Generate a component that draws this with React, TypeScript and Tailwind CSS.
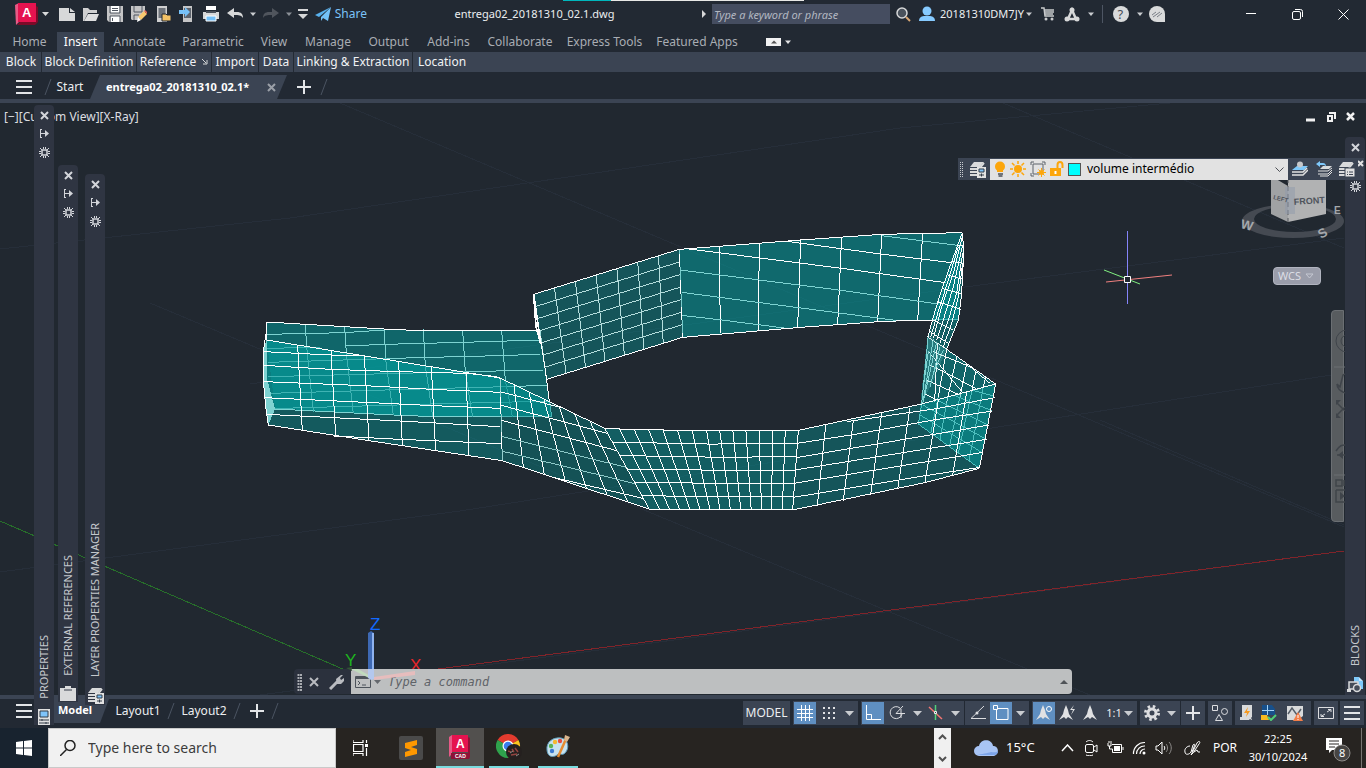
import type { ReactNode } from "react";

type Point = [number, number];

function Svg({ w = 16, h = 16, children }: { w?: number; h?: number; children: ReactNode }) {
 return (
  <svg width={w} height={h} viewBox={`0 0 ${w} ${h}`} fill="none" className="shrink-0" aria-hidden="true">
   {children}
  </svg>
 );
}

function Caret({ color = "#c9ccd0", big = false }: { color?: string; big?: boolean }) {
 return (
  <Svg w={9} h={6}>
   <path d={big ? "M0 1h9L4.5 6z" : "M2 1.500h6L5 5z"} fill={color} />
  </Svg>
 );
}

function IconButton({ label, className, children }: { label: string; className: string; children: ReactNode }) {
 return (
  <button type="button" aria-label={label} className={`flex shrink-0 items-center justify-center ${className}`}>
   {children}
  </button>
 );
}

function Burger() {
 return (
  <Svg>
   <path d="M0 2h16M0 8h16M0 14h16" stroke="#e3e5e8" strokeWidth="2" />
  </Svg>
 );
}

function Plus() {
 return (
  <Svg>
   <path d="M8 1v14M1 8h14" stroke="#e3e5e8" strokeWidth="2" />
  </Svg>
 );
}

function Slash() {
 return (
  <Svg w={8} h={16}>
   <path d="M7 0L1 16" stroke="#4b5462" strokeWidth="1" />
  </Svg>
 );
}

function LayerStack({ badge }: { badge?: ReactNode }) {
 return (
  <Svg w={17} h={17}>
   <path d="M5 1h10l-4 5H1z" fill="#d9dadb" />
   <path d="M1 8h7M1 11h7M1 14h7M11 7l4-5" stroke="#d9dadb" strokeWidth="2" />
   {badge}
  </Svg>
 );
}

const panelBadge = (
 <g>
  <path d="M8 6h9v11H8z" fill="#e2e2e2" />
  <path d="M10 8h5v3h-5z" fill="#7fc4fa" stroke="#333c49" />
  <path d="M10 14h5M12.500 12.500v3" stroke="#333c49" />
 </g>
);

const listBadge = (
 <g>
  <path d="M7 7h10v9H7z" fill="#e2e2e2" stroke="#3b4453" />
  <path d="M9 11h1M11 11h4M9 13.500h1M11 13.500h4" stroke="#3b4453" />
 </g>
);

const quickAccess = [
 {
  label: "New",
  icon: (
   <Svg>
    <path d="M0 2h10v5h6v8H0z" fill="#d7d8d9" />
    <path d="M11 2l5 4h-5z" fill="#d7d8d9" />
   </Svg>
  ),
 },
 {
  label: "Open",
  icon: (
   <Svg>
    <path d="M0 15V2h5l2 2h7v3H5L1 15z" fill="#cfcfd0" />
    <path d="M5 8h11l-3 7H1z" fill="#dededf" />
   </Svg>
  ),
 },
 {
  label: "Save",
  icon: (
   <Svg>
    <path d="M0 0h16v16H2l-2-2z" fill="#c5c5c6" />
    <path d="M4 0h8v7H4zM4 10h9v6H4z" fill="#fff" />
    <path d="M3 0v7h10V0M3 16v-6h10v6M5 2.500h6M5 4.500h6M5.500 12v3" stroke="#505660" />
   </Svg>
  ),
 },
 {
  label: "Save as",
  icon: (
   <Svg>
    <path d="M0 0h14v7l-7 7H1l-1-1z" fill="#c5c5c6" />
    <path d="M3 0v6h8V0M3 14v-5h5" stroke="#505660" />
    <path d="M13 5l3 3-6 6-3-3z" fill="#f8c96f" />
    <path d="M13 5l1-1 3 3-1 1z" fill="#e8665a" />
    <path d="M7 11l3 3-4 2z" fill="#fff" />
   </Svg>
  ),
 },
 {
  label: "Open from web and mobile",
  icon: (
   <Svg>
    <path d="M2 0h10v16H2z" fill="#cfcfd0" />
    <path d="M3.500 2h7v10h-7z" fill="#6d727a" />
    <path d="M7 8h4l1 1h4v6H7z" fill="#f2c166" stroke="#222933" />
   </Svg>
  ),
 },
 {
  label: "Save to web and mobile",
  icon: (
   <Svg>
    <path d="M4 0h9v16H4z" fill="#c5c5c6" />
    <path d="M5 2h7v10H5z" fill="#5d636d" />
    <path d="M0 4h6V1l5 5-5 5V8H0z" fill="#76c0f7" />
   </Svg>
  ),
 },
 {
  label: "Plot",
  icon: (
   <Svg>
    <path d="M3 0h10v4H3z" fill="#fff" />
    <path d="M0 6h16v7H0z" fill="#d7d8d9" />
    <path d="M3 5h10v2H3z" fill="#4a505a" />
    <path d="M3 10h10v5H3z" fill="#76c0f7" stroke="#fff" />
   </Svg>
  ),
 },
];

function TitleBar() {
 return (
  <header className="flex h-7 items-center text-xs text-[#eceef0]">
   <div className="flex w-[367px] shrink-0 items-center">
    <IconButton label="Application menu" className="ml-3.5 w-6">
     <Svg w={24} h={22}>
      <path d="M1 2l4-2v19l-3 3z" fill="#e75a86" />
      <path d="M3 22l3-3h16V3l2 1v15l-3 3z" fill="#7c0a28" />
      <path d="M4 0h18v19H4z" fill="#e5134f" />
      <text x="8" y="14" fontSize="13" fontWeight="700" fill="#fff" fontFamily="Liberation Sans, sans-serif">
       A
      </text>
     </Svg>
    </IconButton>
    <IconButton label="Menu options" className="w-[15px]">
     <Svg w={7} h={4}>
      <path d="M0 0h7L3.500 4z" fill="#d9dadb" />
     </Svg>
    </IconButton>
    <span className="w-1" />
    {quickAccess.map((item) => (
     <IconButton key={item.label} label={item.label} className="h-6 w-6">
      {item.icon}
     </IconButton>
    ))}
    <IconButton label="Undo" className="w-6">
     <Svg>
      <path d="M7 2v4h3c4 0 6 2 6 6-2-3-4-3-9-3v3L0 7z" fill="#d7d8d9" />
     </Svg>
    </IconButton>
    <IconButton label="Undo list" className="w-3">
     <Caret />
    </IconButton>
    <IconButton label="Redo" className="w-6">
     <Svg>
      <path d="M9 2v4H6c-4 0-6 2-6 6 2-3 4-3 9-3v3l7-5z" fill="#50555d" />
     </Svg>
    </IconButton>
    <IconButton label="Redo list" className="w-3">
     <Caret color="#8b9097" />
    </IconButton>
    <IconButton label="Customize" className="w-4">
     <Svg w={10} h={10}>
      <path d="M0 1h10" stroke="#d7d8d9" strokeWidth="2" />
      <path d="M0 5h10L5 10z" fill="#d7d8d9" />
     </Svg>
    </IconButton>
    <button type="button" className="ml-1 flex items-center gap-1 text-[#7cc3f8]">
     <Svg>
      <path d="M16 1L0 9l4 2z" fill="#58b1ee" />
      <path d="M16 1L6 11v4l2-3 5 3z" fill="#73c2f9" />
     </Svg>
     Share
    </button>
   </div>
   <h1 className="flex-1 whitespace-nowrap text-center text-[11px]">entrega02_20181310_02.1.dwg</h1>
   <div className="flex w-[664px] shrink-0 items-center">
    <Svg w={10} h={10}>
     <path d="M0 1l4 4-4 4z" fill="#d7d8d9" />
    </Svg>
    <input
     aria-label="Search help"
     placeholder="Type a keyword or phrase"
     className="h-5 w-[178px] bg-[#454d60] px-0.5 text-[11px] italic text-white placeholder:text-[#b3b8c2]"
    />
    <IconButton label="Search" className="ml-1 w-5">
     <Svg>
      <circle cx="6" cy="7" r="5" fill="#4a525c" stroke="#d7d8d9" strokeWidth="1.500" />
      <path d="M10 11l4 4" stroke="#d8a774" strokeWidth="2" />
     </Svg>
    </IconButton>
    <button type="button" className="ml-[5px] flex w-[113px] items-center whitespace-nowrap text-[11px]">
     <span className="mr-[5px] shrink-0">
      <Svg>
       <circle cx="8" cy="5" r="4.500" fill="#86caff" />
       <path d="M0 15c0-4 3-5 6-5h4c3 0 6 1 6 5z" fill="#86caff" />
      </Svg>
     </span>
     20181310DM7JY
     <Caret />
    </button>
    <IconButton label="Store" className="ml-1 w-6">
     <Svg w={14} h={14}>
      <path d="M0 1h3l1 8h9M3 3h10M4 5h9M4 7h8" stroke="#c8cacc" strokeWidth="1.500" />
      <circle cx="5" cy="12" r="1.500" fill="#c8cacc" />
      <circle cx="11" cy="12" r="1.500" fill="#c8cacc" />
     </Svg>
    </IconButton>
    <IconButton label="Autodesk app store" className="w-6">
     <Svg w={16} h={15}>
      <path d="M8 3l4 9H4z" stroke="#d7d8d9" strokeWidth="2.500" />
      <circle cx="8" cy="3" r="2.500" fill="#d7d8d9" />
      <circle cx="3" cy="12" r="2.500" fill="#d7d8d9" />
      <circle cx="13" cy="12" r="2.500" fill="#d7d8d9" />
     </Svg>
    </IconButton>
    <IconButton label="App options" className="w-3">
     <Caret />
    </IconButton>
    <span className="ml-1.5 mr-2 h-4.5 w-px bg-[#4d5563]" />
    <IconButton label="Help" className="ml-0.5 w-4">
     <Svg>
      <circle cx="8" cy="8" r="8" fill="#d9dadb" />
      <text x="4.500" y="13" fontSize="13" fill="#454c56" fontFamily="Noto Sans, sans-serif">
       ?
      </text>
     </Svg>
    </IconButton>
    <IconButton label="Help options" className="w-5">
     <Caret />
    </IconButton>
    <IconButton label="Assistant" className="w-4">
     <Svg>
      <path d="M8 0a8 8 0 1 0 0 16h8V8a8 8 0 0 0-8-8z" fill="#d9dadb" />
      <path d="M3 9l4-3M4 11l7-5M8 11l5-4" stroke="#7a7f87" />
     </Svg>
    </IconButton>
    <IconButton label="Minimize" className="ml-auto w-[46px]">
     <Svg w={10} h={10}>
      <path d="M0 4.500h10" stroke="#fff" />
     </Svg>
    </IconButton>
    <IconButton label="Restore" className="w-[46px]">
     <Svg w={11} h={11}>
      <rect x=".5" y="2.500" width="8" height="8" rx="1.500" stroke="#fff" />
      <path d="M3 .5h5.500a2 2 0 0 1 2 2V8" stroke="#fff" />
     </Svg>
    </IconButton>
    <IconButton label="Close" className="w-[46px]">
     <Svg w={11} h={11}>
      <path d="M.5.5l10 10M10.500.5l-10 10" stroke="#fff" />
     </Svg>
    </IconButton>
   </div>
  </header>
 );
}

const ribbonTabs = [
 { title: "Home", width: "w-[57px]" },
 { title: "Insert", width: "w-[47px]" },
 { title: "Annotate", width: "w-[71px]" },
 { title: "Parametric", width: "w-[76px]" },
 { title: "View", width: "w-[46px]" },
 { title: "Manage", width: "w-[62px]" },
 { title: "Output", width: "w-[59px]" },
 { title: "Add-ins", width: "w-[61px]" },
 { title: "Collaborate", width: "w-[82px]" },
 { title: "Express Tools", width: "w-[87px]" },
 { title: "Featured Apps", width: "w-[98px]" },
];

const ribbonPanels = [
 { title: "Block", width: "w-[41px]" },
 { title: "Block Definition", width: "w-[95px]" },
 { title: "Reference", width: "w-[75px]" },
 { title: "Import", width: "w-[47px]" },
 { title: "Data", width: "w-[35px]" },
 { title: "Linking & Extraction", width: "w-[119px]" },
 { title: "Location", width: "w-[58px]" },
];

function Ribbon() {
 return (
  <div className="text-xs">
   <nav className="flex h-6 items-end">
    {ribbonTabs.map((tab) => (
     <button
      type="button"
      key={tab.title}
      className={`h-5 shrink-0 whitespace-nowrap ${tab.width} ${
       tab.title === "Insert" ? "bg-[#3b4453] text-white" : "text-[#a9adb3]"
      } ${tab.title === "Home" ? "pl-0.5" : ""}`}
     >
      {tab.title}
     </button>
    ))}
    <IconButton label="Minimize ribbon" className="ml-5 h-5 gap-0.5">
     <Svg w={15} h={8}>
      <path d="M0 0h15v8H0z" fill="#f1f1f2" />
      <path d="M5 5.500h6L8 2.500z" fill="#555" />
     </Svg>
     <Caret color="#e1e2e4" />
    </IconButton>
   </nav>
   <div className="flex h-5 bg-[#3b4453] pl-px text-[#f1f2f4]">
    {ribbonPanels.map((panel) => (
     <button
      type="button"
      key={panel.title}
      className={`flex shrink-0 items-center justify-center gap-1.5 whitespace-nowrap border-[#232a34] ${panel.width} ${
       panel.title === "Location" ? "" : "border-r"
      }`}
     >
      {panel.title}
      {panel.title === "Reference" && (
       <Svg w={6} h={6}>
        <path d="M0 0l4 4M5 1v4H1" stroke="#d7d8d9" />
       </Svg>
      )}
     </button>
    ))}
   </div>
  </div>
 );
}

function DocumentTabs() {
 return (
  <div className="flex h-[27px] items-center pt-[3px] text-xs text-[#eceef0]">
   <IconButton label="File tab menu" className="w-12">
    <Burger />
   </IconButton>
   <div className="-ml-1">
    <Slash />
   </div>
   <button type="button" className="w-[36px]">
    Start
   </button>
   <div className="ml-0.5 flex h-6 w-[197px] shrink-0 items-center bg-[#3b4453] pl-4 [clip-path:polygon(10px_0,100%_0,calc(100%_-_10px)_100%,0_100%)]">
    <button type="button" className="w-[149px] whitespace-nowrap text-left text-[11px] font-bold text-white">
     entrega02_20181310_02.1*
    </button>
    <IconButton label="Close tab" className="ml-3">
     <Svg w={9} h={9}>
      <path d="M1 1l7 7M8 1L1 8" stroke="#9ba0a8" strokeWidth="2" />
     </Svg>
    </IconButton>
   </div>
   <IconButton label="New tab" className="ml-[5px] w-6">
    <Plus />
   </IconButton>
   <div className="ml-1">
    <Slash />
   </div>
  </div>
 );
}

// Line path for the iso curves of a quad, corners given clockwise from top left
function isoCurves([a, b, c, d]: Point[], cols: number, rows: number) {
 const mix = (p: Point, q: Point, t: number) => [p[0] + (q[0] - p[0]) * t, p[1] + (q[1] - p[1]) * t];
 let path = "";
 for (let i = 0; i <= cols; i++) {
  path += `M${mix(a, b, i / cols)}L${mix(d, c, i / cols)}`;
 }
 for (let i = 0; i <= rows; i++) {
  path += `M${mix(a, d, i / rows)}L${mix(b, c, i / rows)}`;
 }
 return path;
}

function Quad({
 corners,
 cols,
 rows,
 opacity,
 stroke = "#fff",
}: {
 corners: Point[];
 cols: number;
 rows: number;
 opacity: number;
 stroke?: string;
}) {
 return (
  <>
   <polygon points={corners.join(" ")} fill="#02a0a0" fillOpacity={opacity} stroke="none" />
   <path d={isoCurves(corners, cols, rows)} stroke={stroke} />
   <polygon points={corners.join(" ")} />
  </>
 );
}

function Model() {
 const soft = "#7ed3d2";
 return (
  <g fill="none" stroke="#fff" strokeWidth="3" shapeRendering="crispEdges">
   <g transform="translate(250 220) scale(0.333333)">
    <clipPath id="slope">
     <path d="M750 474L1065 625 1197 867 757 722z" />
    </clipPath>
    <path
     d="M50 306L400 327 490 331H870L905 590H550L430 585 75 565 50 540z"
     fill="#02a0a0"
     fillOpacity=".52"
     stroke="none"
    />
    <path
     d="M50 360L750 474 757 722 55 615 47 560 40 480 42 380z"
     fill="#02a0a0"
     fillOpacity=".42"
     stroke="none"
    />
    <path d="M50 360L750 474 898 543 905 590H550L430 585 75 565z" fill="#02a0a0" fillOpacity=".35" stroke="none" />
    <g stroke={soft}>
     <path d="M166 314L170 380M284 320L289 399M403 326L407 420M520 328L526 438M638 331L646 457M755 331L766 480" />
     <path d="M50 343L284 338 403 330M287 378L405 373 640 367 870 360M410 416L525 412 640 410 870 403M648 455L880 450M770 500L890 496M870 544L898 543" />
     <path d="M75 567L430 585 550 590H905L898 540" />
    </g>
    <g stroke="#3fb3b3">
     <path d="M170 380L190 575M289 399L310 580M407 420L430 585M526 438L548 588M646 457L668 590M766 480L787 590" />
     <path d="M50 385L210 382M55 427L410 416M55 470L530 458 648 455M60 520L650 503 770 500M60 566L545 552 870 544" />
    </g>
    <path d="M50 306L400 327 490 331H870L898 543" />
    <path d="M50 360L52 480 75 567 55 615 47 560 40 480 42 380z" fill={soft} stroke="none" />
    <path d="M50 306V360L750 474 757 722 357 662 55 615 47 560 40 480 42 380 50 330" />
    <path d="M143 377L157 632M243 392L257 647M343 408L357 662M446 425L457 678M544 440L557 694M648 457L657 709" />
    <path d="M42 395L240 405 343 408M40 436L240 448 447 455 650 460 740 470M42 485L345 497 547 508 750 517M45 533L345 547 550 557 750 565M50 583L450 603 750 620M250 648L450 658 755 671" />
    <path d="M750 474L1065 625 1197 867 757 722z" fill="#028d8d" fillOpacity=".42" stroke="none" />
    <g clipPath="url(#slope)">
     <path d="M792 494L820 742M837 515L883 763M882 537L946 784M928 560L1009 805M974 582L1072 826M1020 604L1134 846" />
     <path d="M750 470L1200 589M750 515L1200 632M750 555L1200 674M750 600L1200 718M750 735L1200 840" />
     <path d="M750 648L1200 760M750 692L1200 802" stroke="#8dc9c8" />
    </g>
    <path d="M750 474L1065 625M757 722L1197 867" />
    <Quad
     corners={[
      [851, 223],
      [1288, 88],
      [1298, 352],
      [890, 478],
     ]}
     cols={7}
     rows={7}
     opacity={0.38}
     stroke="#b5dedd"
    />
    <path d="M851 223L858 320 872 372 862 300z" strokeWidth="5" />
   </g>
   <g transform="translate(600 220) scale(0.333333)">
    <clipPath id="back">
     <path d="M238 88L602 60 845 43 1087 38 1000 300 850 304 602 322 248 352z" />
    </clipPath>
    <path d="M238 88L602 60 845 43 1087 38 1075 298 850 304 602 322 248 352z" fill="#02a0a0" fillOpacity=".54" stroke="none" />
    <g clipPath="url(#back)">
     <path d="M358 78L361 340M478 67L475 330M602 60L593 322M725 48L713 313M845 45L833 307M968 38L953 302" />
     <path d="M260 86L725 145 1087 195M545 62L850 103 1087 132" />
     <path
      d="M240 150L478 180 715 210 1087 262M245 217L480 248 710 278 940 308M245 286L365 300 560 325M845 47L1087 78"
      stroke={soft}
     />
    </g>
    <path d="M238 88L602 60 845 43 1087 38M248 352L602 322 850 304 1000 300" />
    <path d="M1000 300L1075 298" stroke={soft} />
    <path d="M1087 38L1090 120 1085 220 1075 300 1040 388 985 350 1000 290z" fill="#02a0a0" fillOpacity=".45" stroke="none" />
    <path d="M1087 38L1090 75 1090 120 1085 220 1075 300 1040 388" />
    <path d="M1087 38L1055 125 1025 210 1000 290 985 345 975 450 965 552M1087 50L1060 160 1025 260 1000 355M1088 75L1060 200 1030 300 1010 360M1088 100L1070 220 1045 300 1020 370M1088 130L1075 230 1055 310 1030 380M1075 80L1045 180 1010 290 992 350M1072 75L1090 78M1057 125L1090 130M1043 165L1089 178M1025 205L1086 222M1012 245L1083 268M1000 300L1060 330M990 335L1045 370" />
    <Quad
     corners={[
      [15, 626],
      [320, 633],
      [360, 868],
      [148, 868],
     ]}
     cols={7}
     rows={6}
     opacity={0.45}
    />
    <Quad
     corners={[
      [320, 633],
      [595, 631],
      [578, 870],
      [360, 868],
     ]}
     cols={7}
     rows={6}
     opacity={0.45}
    />
    <path d="M982 350L1040 388 1187 492 1138 745 955 612z" fill="#02a0a0" fillOpacity=".5" stroke="none" />
    <path d="M1040 388L1015 530M1070 410L1040 548M1100 432L1080 530M1128 452L1115 515M1157 472L1150 500M985 394L1090 520M1012 370L1004 545M990 435L1060 470 1135 510M1000 395L1110 440 1170 490M978 480L1080 525M972 520L1010 540" />
    <path
     d="M1015 530L992 640M1040 548L1020 660M1080 530L1048 680M1115 515L1075 700M1150 500L1107 722M1120 512L1182 528M1060 525L1175 572M1010 540L1168 617M968 555L1160 658M960 585L1150 700M985 394L970 500"
     stroke={soft}
    />
    <path d="M982 350L1040 388 1187 492 1138 745" />
    <path d="M1138 745L955 612 965 552" stroke={soft} />
    <path d="M985 345L1040 388 1005 470 965 552z" fill={soft} fillOpacity=".2" stroke="none" />
    <path d="M1000 358L970 540M1010 365L980 500 968 550M1020 380L990 500M1030 390L1000 460" stroke={soft} />
    <path d="M595 631L965 552 1187 492 1138 745 975 788 578 870z" fill="#02a0a0" fillOpacity=".38" />
    <path d="M677 616L652 857M760 600L730 842M845 580L812 825M930 563L893 807M1015 540L975 788M1100 517L1058 765" />
    <path d="M740 605L1015 565 1184 533M592 670L765 643 1000 600 1177 573M588 713L1168 615M585 750L990 685 1160 658M582 790L980 725 1150 697M580 832L970 768 1140 742" />
   </g>
  </g>
 );
}

function Drawing() {
 return (
  <svg
   viewBox="0 103 1366 592"
   preserveAspectRatio="xMidYMid slice"
   className="absolute inset-0 h-full w-full"
   role="img"
   aria-label="Model view"
  >
   <g stroke="#262e39" fill="none" shapeRendering="crispEdges">
    <path d="M0 249L290 218 900 128 1170 103M0 572L460 511 1344 373M250 384L965 287 1344 238M260 695L900 610 1344 551" />
    <path d="M340 103L617 220 1344 527M1003 103L1344 248M150 303L620 500 1090 695M1100 420L1344 525" />
   </g>
   <path d="M0 521L345 670" stroke="#27702a" shapeRendering="crispEdges" />
   <path d="M415 672L1344 551" stroke="#81242a" shapeRendering="crispEdges" />
   <Model />
   <path d="M1127.500 231v73" stroke="#8584fa" />
   <path d="M1104 270l36 14" stroke="#81f081" />
   <path d="M1106 282l66-7" stroke="#f0807f" />
   <path d="M1124.500 276.500h6v6h-6z" fill="#212830" stroke="#fff" />
   <g fontFamily="Liberation Sans, sans-serif" fontSize="17">
    <text x="370" y="630" fill="#126aff">
     Z
    </text>
    <text x="345" y="666" fill="#1eb41e">
     Y
    </text>
    <text x="410" y="671" fill="#e7262a">
     X
    </text>
   </g>
   <g>
    <path
     d="M1242 221a51 17 0 1 0 102 0a51 17 0 1 0 -102 0zM1254 219a41 13 0 1 0 82 0a41 13 0 1 0 -82 0z"
     fill="#454a52"
     fillRule="evenodd"
    />
    <path d="M1271 176l17 10v36l-17-8z" fill="#a0a2a4" />
    <path d="M1288 180l38-6v40l-38 8z" fill="#b1b2b3" />
    <path d="M1288 178v44" stroke="#585b60" strokeDasharray="5 3" />
    <path d="M1285 187h10v27h-10z" fill="#8f99ab" fillOpacity=".5" />
    <g fontFamily="Liberation Sans, sans-serif" fontWeight="700" fill="#4f545c">
     <text x="1294" y="205" fontSize="9" transform="rotate(-4 1294 205)">
      FRONT
     </text>
     <text x="1273" y="199" fontSize="6" transform="rotate(14 1273 199)">
      LEFT
     </text>
     <text x="1240" y="228" fontSize="13" fill="#a5a8ac" transform="rotate(14 1240 228)">
      W
     </text>
     <text x="1321" y="239" fontSize="13" fill="#a5a8ac" transform="rotate(-30 1321 239)">
      S
     </text>
     <text x="1334" y="214" fontSize="10" fill="#a5a8ac">
      E
     </text>
    </g>
   </g>
  </svg>
 );
}

function CloseGlyph() {
 return (
  <Svg w={9} h={9}>
   <path d="M1 1l7 7M8 1L1 8" stroke="#d3d5da" strokeWidth="2" />
  </Svg>
 );
}

function Cog() {
 return (
  <Svg w={11} h={11}>
   <path d="M3 3h5v5H3z" stroke="#d3d5da" strokeWidth="1.500" />
   <path d="M1 1l2 2M8 8l2 2M10 1L8 3M3 8l-2 2M4.500 0v2M6.500 0v2M4.500 9v2M6.500 9v2M0 4.500h2M0 6.500h2M9 4.500h2M9 6.500h2" stroke="#d3d5da" />
  </Svg>
 );
}

function Palette({
 title,
 place,
 pinned = true,
 children,
}: {
 title: string;
 place: string;
 pinned?: boolean;
 children: ReactNode;
}) {
 return (
  <section className={`absolute z-10 flex w-5 flex-col items-center rounded-t-sm bg-[#2f3542] ${place}`}>
   <div className={`flex flex-col items-center pt-1.5 ${pinned ? "gap-2" : "gap-[29px]"}`}>
    <IconButton label={`Close ${title}`} className="h-[9px]">
     <CloseGlyph />
    </IconButton>
    {pinned && (
     <IconButton label={`Auto-hide ${title}`} className="h-[11px]">
      <Svg w={10} h={11}>
       <path d="M1.500 1v9M1 5.500h7M1 1.500h2M1 9.500h2" stroke="#d3d5da" />
       <path d="M6 2l4 3.500L6 9z" fill="#d3d5da" />
      </Svg>
     </IconButton>
    )}
    <IconButton label={`${title} options`} className="h-[11px]">
     <Cog />
    </IconButton>
   </div>
   <h2 className="mt-auto rotate-180 whitespace-nowrap text-[11px] leading-4 text-[#c5c8cd] [writing-mode:vertical-rl]">
    {title}
   </h2>
   <div className="mt-2.5">{children}</div>
  </section>
 );
}

function Palettes() {
 return (
  <>
   <Palette title="PROPERTIES" place="left-[34px] top-0.5 -bottom-[30px] pb-0">
    <Svg w={12} h={16}>
     <path d="M0 0h12v16H0z" fill="#e0e0e0" />
     <path d="M2 2h8v6H2z" fill="#7fc4fa" stroke="#333c49" />
     <path d="M1 11h10M1 14h10M4 10v2M8 13v2" stroke="#333c49" />
    </Svg>
   </Palette>
   <Palette title="EXTERNAL REFERENCES" place="left-[58px] top-[62px] -bottom-[7px] pb-0">
    <Svg w={16} h={16}>
     <path d="M0 2h5V0h6v2h5v13H0z" fill="#d9dadb" />
     <path d="M4 4h8" stroke="#343b48" />
    </Svg>
   </Palette>
   <Palette title="LAYER PROPERTIES MANAGER" place="left-[85px] top-[71px] -bottom-[10px] pb-px">
    <LayerStack badge={panelBadge} />
   </Palette>
   <Palette title="BLOCKS" pinned={false} place="right-px top-[34px] bottom-0 pb-0.5">
    <Svg w={16} h={17}>
     <path d="M7 1h5v4h4v8H7z" fill="#7fc9fb" />
     <path d="M12 1l4 4h-4z" fill="#c3e5fc" />
     <path d="M2 6h9v7H2z" fill="#454d59" stroke="#d9dadb" strokeWidth="1.500" />
     <circle cx="10" cy="12" r="3.500" fill="#454d59" stroke="#d9dadb" strokeWidth="1.500" />
     <path d="M0 13h4v3H0z" fill="#d9dadb" />
    </Svg>
   </Palette>
  </>
 );
}

function LayersToolbar() {
 return (
  <div className="absolute right-0.5 top-[55px] z-20 flex h-[22px] w-[406px] items-center bg-[#3b4453]">
   <Svg w={9} h={16}>
    <path d="M2.500 1v15M4.500 1v15" stroke="#c5c8cd" strokeDasharray="1 1" />
   </Svg>
   <IconButton label="Layer properties" className="w-[20px]">
    <LayerStack badge={panelBadge} />
   </IconButton>
   <div className="relative ml-[3px] flex-1">
    <select
     aria-label="Layer"
     className="block h-[21px] w-full appearance-none bg-[#e2e2e2] pl-[97px] text-xs text-black"
    >
     <option>volume intermédio</option>
    </select>
    <div className="pointer-events-none absolute inset-0 flex items-center gap-0.5 pl-0.5">
     <Svg>
      <circle cx="8" cy="5.500" r="5" fill="#fca60b" />
      <path d="M5 8h6v3H5z" fill="#fca60b" />
      <path d="M6 13h5M6.500 15h4" stroke="#70747a" strokeWidth="2" />
     </Svg>
     <Svg>
      <circle cx="8" cy="8" r="4" fill="#fca60b" />
      <path
       d="M8 0v3M8 13v3M0 8h3M13 8h3M2 2l2.500 2.500M11.500 11.500L14 14M14 2l-2.500 2.500M2 14l2.500-2.500"
       stroke="#fca60b"
       strokeWidth="1.500"
      />
     </Svg>
     <span className="ml-0.5">
      <Svg>
       <path d="M3 3h10v7M10 13H3V3M1 4V1h3M12 1h3v3M1 12v3h3" stroke="#5d636b" />
       <circle cx="11.500" cy="11.500" r="2.500" fill="#fca60b" />
       <path d="M11.500 7v9M7 11.500h9M8.500 8.500l6 6M14.500 8.500l-6 6" stroke="#fca60b" />
      </Svg>
     </span>
     <Svg>
      <path d="M9.500 7V4c0-4 5-4 5 0v3" stroke="#fca60b" strokeWidth="2" />
      <path d="M2 7h11v8H2z" fill="#fca60b" />
      <path d="M7.500 10v3" stroke="#fff" strokeWidth="2" />
     </Svg>
     <span className="ml-0.5 h-[13px] w-[13px] shrink-0 border border-[#555] bg-[#00ffff]" />
    </div>
    <div className="pointer-events-none absolute right-1 top-2">
     <Svg w={9} h={6}>
      <path d="M.5.5l4 4 4-4" stroke="#4c4f55" />
     </Svg>
    </div>
   </div>
   <IconButton label="Make object's layer current" className="w-6">
    <Svg>
     <path d="M5 5h11l-4 4H0z" fill="#7fc9fb" />
     <path d="M0 11h11l4-4M0 14h11l5-5" stroke="#e2e2e2" strokeWidth="1.500" />
     <circle cx="8" cy="3.500" r="3" fill="#c6c8cb" />
    </Svg>
   </IconButton>
   <IconButton label="Layer previous" className="w-6">
    <Svg>
     <path d="M7 5h9l-3 3H4z" fill="#d9dadb" />
     <path d="M2 10h10l4-3M2 13h10l4-4M4 15h8l4-4" stroke="#e2e2e2" />
     <path d="M0 3l4-3v2h3c2 0 3 1 3 4-1-2-2-2-3-2H4v2z" fill="#7fc9fb" />
    </Svg>
   </IconButton>
   <IconButton label="Layer states" className="w-5">
    <LayerStack badge={listBadge} />
   </IconButton>
   <IconButton label="Close layers toolbar" className="mb-3 ml-0.5 w-[6px]">
    <Svg w={6} h={7}>
     <path d="M0 1l5 5M5 1L0 6" stroke="#e2e2e2" strokeWidth="2" />
    </Svg>
   </IconButton>
  </div>
 );
}

function CommandLine() {
 return (
  <div className="absolute bottom-px left-[294px] right-[294px] z-10 flex h-[25px] items-center rounded-sm bg-[#2b313d]">
   <Svg w={12} h={18}>
    <path d="M4.500 1v17M7 1v17" stroke="#a8abb0" strokeWidth="2" strokeDasharray="2 1" />
   </Svg>
   <IconButton label="Close command line" className="w-4">
    <Svg w={10} h={10}>
     <path d="M1 1l8 8M9 1L1 9" stroke="#b9bbc0" strokeWidth="2" />
    </Svg>
   </IconButton>
   <IconButton label="Customize command line" className="w-[29px]">
    <Svg>
     <path d="M1 15l8-8" stroke="#b9bbc0" strokeWidth="3" />
     <path d="M8 10L7 5l5-4h2l-3 3 1 2 3-2v3l-3 3z" fill="#b9bbc0" />
    </Svg>
   </IconButton>
   <div className="flex h-full flex-1 items-center rounded-r-sm bg-[#bdbfc0] px-1">
    <IconButton label="Recent commands" className="gap-0.5">
     <Svg w={16} h={12}>
      <path d="M.5.5h15v11H.500z" stroke="#4d535b" />
      <path d="M1 2h14" stroke="#4d535b" strokeWidth="2" />
      <path d="M3 5l2 2-2 2M7 9h4" stroke="#4d535b" />
     </Svg>
     <Svg w={9} h={6}>
      <path d="M1 1h7L4.500 5z" fill="#65686d" />
     </Svg>
    </IconButton>
    <input
     aria-label="Command"
     placeholder="Type a command"
     className="ml-1.5 flex-1 bg-transparent font-['DejaVu_Sans_Mono','Liberation_Mono',monospace] text-xs italic text-black placeholder:text-[#5f6368]"
    />
    <Svg w={8} h={4}>
     <path d="M0 4h8L4 0z" fill="#4f5358" />
    </Svg>
   </div>
  </div>
 );
}

// Origin marker, its axes stay visible over the command line
function UcsAxes() {
 return (
  <svg
   viewBox="0 103 1366 592"
   preserveAspectRatio="xMidYMid slice"
   className="pointer-events-none absolute inset-0 z-10 h-full w-full"
   aria-hidden="true"
  >
   <path d="M346 668l6-1v4z" fill="#345237" />
   <path d="M351 669l18 9 3-1-14-8z" fill="#c0dabd" />
   <path d="M374 677l41-6v4l-41 5z" fill="#e6bdbd" />
   <path d="M368 633l3-2 3 2v36h-6z" fill="#3e69b3" />
   <path d="M372 633h2v36h-2z" fill="#8eb2ee" />
   <path d="M368 669h6v10l-3 1-3-2z" fill="#b4c8ee" />
  </svg>
 );
}

function NavigationBar() {
 return (
  <div className="absolute right-[22px] top-[207px] h-[212px] w-[13px] rounded-l border border-[#6b6f73] bg-[#585c5f]">
   <Svg w={13} h={212}>
    <g stroke="#3f444a">
     <circle cx="15" cy="30" r="11" />
     <circle cx="15" cy="30" r="6" />
     <path d="M2 56h11M2 164h11" stroke="#6b6f73" />
     <path d="M5 73l3 3 3-12 2-1M5 73c0 4 3 7 8 9M5 92l8 8M5 104l8-8" strokeWidth="1.500" />
     <path d="M4 140c4-6 6-6 9-6M5 144h8M4 169h6v6H4zM12 169v6M4 179h9M4 179v12h9" strokeWidth="1.500" />
    </g>
    <path d="M4 89h5l-5 5zM4 107h5l-5-5zM6 144l5-4v8zM8 181l5 4-5 4z" fill="#3f444a" />
   </Svg>
  </div>
 );
}

function Viewport() {
 return (
  <main className="relative min-h-0 flex-1 bg-[#212830]">
   <Drawing />
   <div className="relative flex h-[27px] items-center justify-between pl-1 pr-[11px] text-xs text-[#dcdee1]">
    <span className="whitespace-nowrap">[−][Custom View][X-Ray]</span>
    <div className="flex items-center gap-2.5">
     <IconButton label="Minimize drawing" className="">
      <Svg w={11} h={10}>
       <path d="M1 8h9" stroke="#f1f1f1" strokeWidth="3" />
      </Svg>
     </IconButton>
     <IconButton label="Restore drawing" className="">
      <Svg w={10} h={10}>
       <path d="M3 1h6v6M2 4h4v5H2z" stroke="#f1f1f1" strokeWidth="2" />
      </Svg>
     </IconButton>
     <IconButton label="Close drawing" className="">
      <Svg w={9} h={9}>
       <path d="M1 1l7 7M8 1L1 8" stroke="#f1f1f1" strokeWidth="2.500" />
      </Svg>
     </IconButton>
    </div>
   </div>
   <button
    type="button"
    className="absolute right-[45px] top-[164px] flex h-[18px] w-[48px] items-center gap-1 rounded border border-[#b1b4bf] bg-[#9a9daa] pl-1 text-[11px] text-[#dcdee5]"
   >
    WCS
    <Svg w={9} h={6}>
     <path d="M1 1h7L4.500 5z" stroke="#c5c8d2" />
    </Svg>
   </button>
   <NavigationBar />
   <LayersToolbar />
   <Palettes />
   <CommandLine />
   <UcsAxes />
  </main>
 );
}

function Toggle({ label, on = false, className = "w-6", children }: { label: string; on?: boolean; className?: string; children: ReactNode }) {
 return (
  <IconButton label={label} className={`h-[22px] ${on ? "bg-[#5f8fc1]" : ""} ${className}`}>
   {children}
  </IconButton>
 );
}

function Group({ children }: { children: ReactNode }) {
 return <div className="flex h-6 shrink-0 items-center bg-[#3b4453] px-px">{children}</div>;
}

function Compass({ extra }: { extra?: ReactNode }) {
 return (
  <Svg w={16} h={16}>
   <path d="M7 0l2 5 1 4 4 6-5-3-2 2-2-2-5 3 4-6 1-4z" fill="#e0e1e3" />
   {extra}
  </Svg>
 );
}

function StatusBar() {
 return (
  <div className="flex h-[29px] items-center justify-between pb-px pr-0.5 text-xs text-[#eceef0]">
   <div className="flex h-full items-center pb-1">
    <IconButton label="Layout menu" className="w-12">
     <Burger />
    </IconButton>
    <button
     type="button"
     className="ml-1.5 h-6 w-[55px] self-start bg-[#3b4453] pb-0.5 pl-1 text-left text-[11px] font-bold text-white [clip-path:polygon(0_0,100%_0,calc(100%_-_9px)_100%,0_100%)]"
    >
     Model
    </button>
    <button type="button" className="w-[58px]">
     Layout1
    </button>
    <Slash />
    <button type="button" className="w-[58px]">
     Layout2
    </button>
    <Slash />
    <IconButton label="New layout" className="ml-0.5 w-7">
     <Plus />
    </IconButton>
    <Slash />
   </div>
   <div className="flex items-center gap-[3px]">
    <Group>
     <button type="button" className="w-[45px]">
      MODEL
     </button>
    </Group>
    <Group>
     <Toggle label="Grid" on className="w-[22px]">
      <Svg>
       <path d="M4.500 0v16M8.500 0v16M12.500 0v16M0 4.500h16M0 8.500h16M0 12.500h16" stroke="#fff" />
      </Svg>
     </Toggle>
     <Toggle label="Snap" className="w-[25px]">
      <Svg w={14} h={14}>
       <path d="M1 2h14M1 7h14M1 12h14" stroke="#e0e1e3" strokeWidth="2" strokeDasharray="2 3" />
      </Svg>
     </Toggle>
     <Toggle label="Snap options" className="w-4">
      <Caret big />
     </Toggle>
    </Group>
    <Group>
     <Toggle label="Ortho" on className="w-[22px]">
      <Svg>
       <path d="M1.500 0v14.500H16M1.500 9.500h5v5" stroke="#fff" />
      </Svg>
     </Toggle>
     <Toggle label="Polar tracking" className="w-[25px]">
      <Svg>
       <path d="M11 3a6 6 0 1 0 2 6M7 8.500h9M7 8.500L14 1M12 4v9" stroke="#dcdde0" />
      </Svg>
     </Toggle>
     <Toggle label="Polar options" className="w-4">
      <Caret big />
     </Toggle>
     <Toggle label="Isometric drafting" className="w-[22px]">
      <Svg>
       <path d="M1 2l13 12" stroke="#f37673" strokeWidth="1.500" />
       <path d="M7.500 0v15" stroke="#53d17b" strokeWidth="1.500" />
       <path d="M6.500 6.500h2v2h-2z" fill="#3b4453" stroke="#eee" />
      </Svg>
     </Toggle>
     <Toggle label="Isometric options" className="w-4">
      <Caret big />
     </Toggle>
    </Group>
    <div className="-ml-0.5">
     <Group>
      <Toggle label="Object snap tracking" className="w-6">
       <Svg>
        <path d="M14 1L1 13.500h15" stroke="#dcdde0" />
        <circle cx="7" cy="8" r="1.500" fill="#dcdde0" />
       </Svg>
      </Toggle>
      <Toggle label="Object snap" on className="w-[22px]">
       <Svg>
        <path d="M3 3.500h12v11H3.500V5" stroke="#fff" />
        <path d="M.5.5h4v4h-4z" fill="#5f8fc1" stroke="#fff" />
       </Svg>
      </Toggle>
      <Toggle label="Object snap options" className="w-4">
       <Caret big />
      </Toggle>
     </Group>
    </div>
    <Group>
     <Toggle label="Annotation visibility" on className="w-[22px]">
      <Compass extra={<circle cx="13" cy="4" r="2.500" stroke="#fff" />} />
     </Toggle>
     <Toggle label="Auto scale" className="w-6">
      <Compass extra={<path d="M15 0l-4 5h3l-2 5 4-6h-3z" fill="#e0e1e3" />} />
     </Toggle>
     <Toggle label="Annotation scale" className="w-6">
      <Compass />
     </Toggle>
     <button type="button" className="flex w-[33px] items-center justify-center gap-0.5 text-[11px]">
      1:1
      <Caret big />
     </button>
    </Group>
    <Group>
     <Toggle label="Workspace" className="w-[22px]">
      <Svg>
       <circle cx="8" cy="8" r="4" stroke="#dcdde0" strokeWidth="3" />
       <circle cx="8" cy="8" r="6.500" stroke="#dcdde0" strokeWidth="3" strokeDasharray="2.500 2.605" />
      </Svg>
     </Toggle>
     <Toggle label="Workspace options" className="w-4">
      <Caret big />
     </Toggle>
    </Group>
    <div className="-ml-0.5">
     <Group>
      <Toggle label="Annotation monitor" className="w-[22px]">
       <Plus />
      </Toggle>
     </Group>
    </div>
    <Group>
     <Toggle label="Isolate objects" className="w-[22px]">
      <Svg>
       <path d="M.5.5h5v5h-5zM7 9.500l3.500 6h-7z" stroke="#dcdde0" />
       <circle cx="12.500" cy="6.500" r="3" stroke="#dcdde0" />
      </Svg>
     </Toggle>
    </Group>
    <Group>
     <Toggle label="Graphics performance" className="w-[22px]">
      <Svg>
       <path d="M3 0h10v15H1v-3h2z" fill="#d9dadb" />
       <path d="M9 2L5 8h3l-1 4 4-6H8z" fill="#f6991f" />
       <path d="M10 15c2 0 3-1 3-3" stroke="#3b4453" />
      </Svg>
     </Toggle>
     <Toggle label="Drawing units" className="w-[22px]">
      <Svg>
       <path d="M1 0h10l3 4v6H1z" fill="#17508b" />
       <path d="M1 5.500h12M6.500 0v10" stroke="#a4d4f7" />
       <path d="M0 10h6l2 5H0z" fill="#f8bc21" />
       <path d="M7 12l3 3 5-5" stroke="#50cf78" strokeWidth="2" />
      </Svg>
     </Toggle>
     <Toggle label="Quick properties" className="w-[30px]">
      <Svg>
       <path d="M0 1h16v10l-5 4H0z" fill="#d9dadb" />
       <path d="M1 9l4-6 5 7 4-6" stroke="#555d68" strokeWidth="1.500" />
       <path d="M11 7l5 9H6z" fill="#f47e48" />
       <path d="M11 10v3M11 14v1" stroke="#fff" />
      </Svg>
     </Toggle>
    </Group>
    <Group>
     <Toggle label="Clean screen" className="w-[22px]">
      <Svg w={16} h={12}>
       <path d="M.5.5h15v11H.500zM9 5l4-2.500M10 2.500h3V5M7 7L3 9.500M3 7v2.500h3" stroke="#dcdde0" />
      </Svg>
     </Toggle>
    </Group>
    <div className="-ml-px">
     <Group>
      <Toggle label="Customization" className="w-[22px]">
       <Burger />
      </Toggle>
     </Group>
    </div>
   </div>
  </div>
 );
}

function Taskbar() {
 return (
  <footer className="flex h-10 items-center bg-[#272421] text-white">
   <IconButton label="Start" className="h-full w-12 bg-[#18232f]">
    <Svg>
     <path d="M0 2l7-1v6.500H0zM8 1l8-1v7.500H8zM0 8.500h7V15l-7-1zM8 8.500h8V16l-8-1z" fill="#fff" />
    </Svg>
   </IconButton>
   <label className="flex h-full w-[288px] shrink-0 items-center border border-[#c9c9c9] bg-[#f1f1f1] pl-[11px]">
    <Svg>
     <circle cx="10" cy="5.500" r="5" stroke="#222" strokeWidth="1.500" />
     <path d="M6.500 9.500L0 16" stroke="#222" strokeWidth="1.500" />
    </Svg>
    <input
     aria-label="Type here to search"
     placeholder="Type here to search"
     className="ml-3 w-56 bg-transparent text-sm text-black placeholder:text-[#3c3c3c]"
    />
   </label>
   <IconButton label="Task view" className="h-full w-[50px]">
    <Svg>
     <path d="M0 0v2.500h10V0M0 16v-2.500h10V16M.5 4.500h9.500v7H.500zM13.500 0v3M13.500 8v8" stroke="#fff" strokeWidth="1.200" />
     <path d="M12 4h3v3h-3z" fill="#fff" />
    </Svg>
   </IconButton>
   <IconButton label="Sublime Text" className="h-full w-[50px]">
    <Svg w={24} h={24}>
     <rect width="24" height="24" rx="2" fill="#4a4a4a" />
     <path d="M6 7l12-3v5l-6 2 6 2v5L6 21v-5l6-2-6-2z" fill="#ff9800" />
    </Svg>
   </IconButton>
   <IconButton label="AutoCAD" className="h-full w-12 border-b-2 border-[#79dcdf] bg-[#52504e]">
    <Svg w={24} h={24}>
     <path d="M1 2l3-2v19l-3 3z" fill="#e75a86" />
     <path d="M3 24V18h17V2l2 1v19l-1 2z" fill="#8e1237" />
     <path d="M4 0h16v17H4z" fill="#e5134f" />
     <text x="8" y="13" fontSize="12" fontWeight="700" fill="#fff" fontFamily="Liberation Sans, sans-serif">
      A
     </text>
     <text x="7" y="23" fontSize="5" fontWeight="700" fill="#fff" fontFamily="Liberation Sans, sans-serif">
      CAD
     </text>
    </Svg>
   </IconButton>
   <IconButton label="Chrome" className="ml-[5px] h-full w-10 border-b-2 border-[#79dcdf]">
    <Svg w={26} h={26}>
     <path d="M12 12L1.600 6A12 12 0 0 1 22.400 6z" fill="#e33b2e" />
     <path d="M12 12L22.400 6A12 12 0 0 1 12 24z" fill="#fcc31e" />
     <path d="M12 12v12A12 12 0 0 1 1.600 6z" fill="#2fa24c" />
     <circle cx="12" cy="12" r="5.500" fill="#fff" />
     <circle cx="12" cy="12" r="4.300" fill="#3b7ded" />
     <circle cx="18" cy="18" r="8" fill="#25201f" />
     <path d="M12 17l3 1M15 21l6-1M19 14l3 4M16 15l2 3" stroke="#94443f" strokeWidth="1.500" />
     <path d="M14 19l3-2M20 22l3-2" stroke="#8b8c88" />
    </Svg>
   </IconButton>
   <IconButton label="Paint" className="ml-[9px] h-full w-10 border-b-2 border-[#79dcdf]">
    <Svg w={26} h={26}>
     <path d="M2 16C1 8 8 3 16 4c7 1 9 10 4 15-3 3-5 0-7 1-1 2-10 6-11-4z" fill="#c7e2ef" stroke="#5f9dbc" />
     <circle cx="6" cy="12" r="2.200" fill="#59b256" />
     <circle cx="10" cy="8" r="2.200" fill="#f5b82d" />
     <circle cx="15" cy="7" r="2.200" fill="#e44e42" />
     <circle cx="7" cy="17" r="2.200" fill="#3979d2" />
     <path d="M21 5l-8 18" stroke="#e48b31" strokeWidth="2.500" />
     <path d="M19 6l1-5 5 2-3 5z" fill="#dab58d" />
    </Svg>
   </IconButton>
   <div className="ml-auto flex h-full w-[17px] flex-col items-center justify-between bg-[#f0f0f0] py-1.5">
    <Svg w={9} h={6}>
     <path d="M1 5l3.500-3.500L8 5" stroke="#505050" strokeWidth="2" />
    </Svg>
    <Svg w={9} h={6}>
     <path d="M1 1l3.500 3.500L8 1" stroke="#505050" strokeWidth="2" />
    </Svg>
   </div>
   <button type="button" className="ml-[23px] flex w-[75px] items-center gap-2 whitespace-nowrap text-[13px]">
    <Svg w={24} h={16}>
     <path d="M5 16a5 5 0 0 1 0-10c2-8 13-7 14 0 7 0 6 10 0 10z" fill="#a8c4f4" />
     <path d="M3 15h17c3 0 4-2 4-4-2 2-5 1-7 1-3 1-10 2-14 3z" fill="#7ca4e8" />
    </Svg>
    15°C
   </button>
   <div className="flex items-center text-xs">
    <IconButton label="Hidden icons" className="ml-1.5 w-6">
     <Svg w={13} h={8}>
      <path d="M1 7l5.500-6L12 7" stroke="#fff" strokeWidth="1.500" />
     </Svg>
    </IconButton>
    <IconButton label="Camera in use" className="w-6">
     <Svg>
      <rect x="2.500" y="4.500" width="8" height="8" rx="1.500" stroke="#fff" />
      <path d="M11 7l3-2v7l-3-2M3 2c2-2 5-2 7 0M3 15c2 1 5 1 7 0" stroke="#fff" />
     </Svg>
    </IconButton>
    <IconButton label="Battery" className="w-6">
     <Svg w={17} h={14}>
      <path d="M5 3.500h9.500v8H5.500V8M16 6v3M1 2v3h3V2M2.500 5v3h3M2 0v2M4 0v2" stroke="#fff" />
      <path d="M7 5h6v5H7z" fill="#fff" />
     </Svg>
    </IconButton>
    <IconButton label="Network" className="w-6">
     <Svg w={14} h={14}>
      <path d="M1.500 13A11 11 0 0 1 13 1.500M4.500 13A8 8 0 0 1 13 5M8 13a5 5 0 0 1 5-5" stroke="#fff" strokeWidth="1.200" />
      <circle cx="12" cy="12" r="1.500" fill="#fff" />
     </Svg>
    </IconButton>
    <IconButton label="Volume" className="w-6">
     <Svg w={17} h={14}>
      <path d="M1 5h2l4-4v12L3 9H1zM9 5c1 1 1 3 0 4" stroke="#fff" />
      <path d="M11 3c2 2 2 6 0 8M14 1c3 3 3 9 0 12" stroke="#8d8b89" />
     </Svg>
    </IconButton>
    <IconButton label="Ink workspace" className="ml-0.5 w-[30px]">
     <Svg w={17} h={16}>
      <path d="M8 13l5-10c2-3 4-1 2 1L9 13l-2 2zM6 6c-3 0-6 3-5 6 0 3 4 3 6 0l2-7c2-2 2 0 1 2l-2 5M10 12l3-2 1 2h2" stroke="#fff" />
     </Svg>
    </IconButton>
    <button type="button" className="w-9">
     POR
    </button>
    <button type="button" className="w-[70px] whitespace-nowrap text-center text-[11px] leading-[18px]">
     22:25
     <br />
     30/10/2024
    </button>
    <IconButton label="Notifications" className="ml-2 w-8">
     <Svg w={28} h={28}>
      <path d="M3 4h16v12H9l-3 3v-3H3z" fill="#fff" />
      <path d="M6 7h10M6 10h10M6 13h6" stroke="#292522" />
      <circle cx="19" cy="19" r="8" fill="#474543" stroke="#8e8c89" />
      <text x="16" y="23" fontSize="11" fill="#fff" fontFamily="Noto Sans, sans-serif">
       8
      </text>
     </Svg>
    </IconButton>
   </div>
   <span className="ml-2 mr-1 h-full w-px bg-[#777471]" />
  </footer>
 );
}

export default function App() {
 return (
  <div className="relative flex h-screen min-w-[1366px] flex-col overflow-hidden bg-[#222933] font-['Noto_Sans','Open_Sans',sans-serif]">
   <div className="absolute left-[563px] top-0 flex h-px w-[241px] bg-[#e8e8e6]">
    <span className="h-px w-12 bg-[#00b7bd]" />
   </div>
   <TitleBar />
   <Ribbon />
   <DocumentTabs />
   <div className="h-1 shrink-0 bg-[#3b4453]" />
   <Viewport />
   <div className="h-1 shrink-0 bg-[#3b4453]" />
   <StatusBar />
   <Taskbar />
  </div>
 );
}
